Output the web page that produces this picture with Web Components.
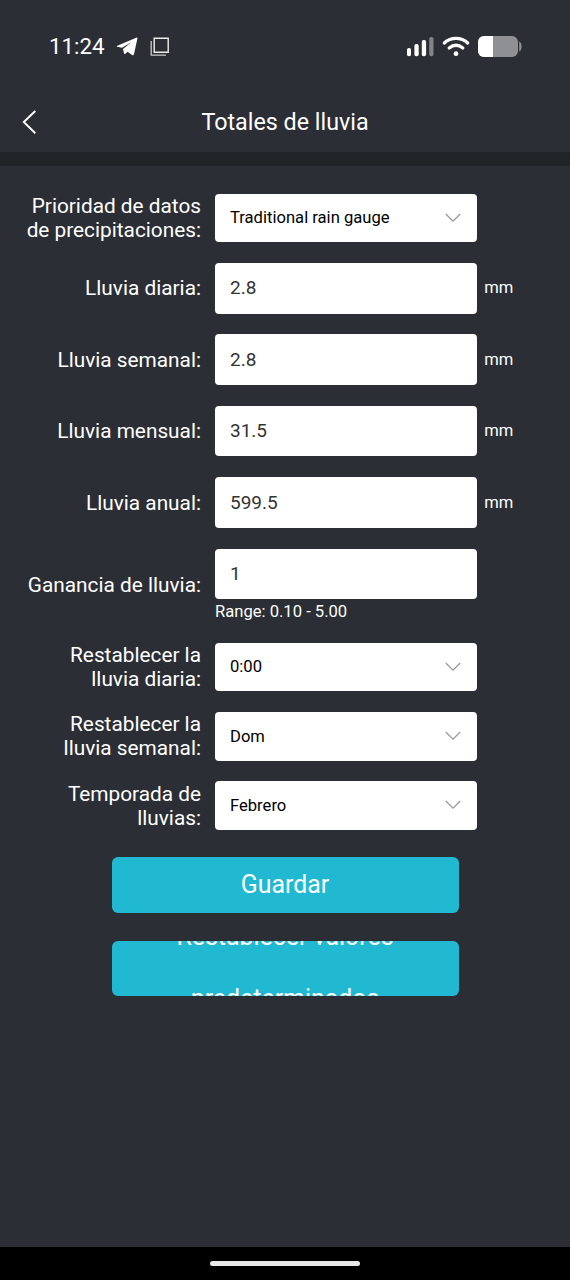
<!DOCTYPE html>
<html lang="es">
<head>
<meta charset="utf-8">
<meta name="viewport" content="width=device-width, initial-scale=1">
<title>Totales de lluvia</title>
<style>
    html, body {
        margin: 0;
        height: 100%;
        background: #2b2e35;
    }
    body {
        font-family: Roboto, "Noto Sans", sans-serif;
        color: #fff;
        overflow: hidden;
    }
</style>
</head>
<body>

<rain-app>
    <status-bar slot="top">11:24</status-bar>
    <title-bar slot="top">Totales de lluvia</title-bar>

    <form-row label="Prioridad de datos de precipitaciones:"><select-box>Traditional rain gauge</select-box></form-row>
    <form-row label="Lluvia diaria:" unit="mm"><text-box>2.8</text-box></form-row>
    <form-row label="Lluvia semanal:" unit="mm"><text-box>2.8</text-box></form-row>
    <form-row label="Lluvia mensual:" unit="mm"><text-box>31.5</text-box></form-row>
    <form-row label="Lluvia anual:" unit="mm"><text-box>599.5</text-box></form-row>
    <form-row label="Ganancia de lluvia:" hint="Range: 0.10 - 5.00"><text-box>1</text-box></form-row>
    <form-row label="Restablecer la lluvia diaria:"><select-box>0:00</select-box></form-row>
    <form-row label="Restablecer la lluvia semanal:"><select-box>Dom</select-box></form-row>
    <form-row label="Temporada de lluvias:"><select-box>Febrero</select-box></form-row>

    <action-button slot="actions">Guardar</action-button>
    <action-button slot="actions">Restablecer valores predeterminados</action-button>
</rain-app>

<script>
class BaseElement extends HTMLElement {
    constructor() {
        super();
        this.attachShadow({ mode: 'open' });
    }
    connectedCallback() {
        this.shadowRoot.innerHTML = this.getStyles() + this.getTemplate();
    }
}

class RainApp extends BaseElement {
    getTemplate() {
        return `
        <slot name="top"></slot>
        <main>
            <div class="rows"><slot></slot></div>
            <div class="actions"><slot name="actions"></slot></div>
        </main>
        <footer><div class="handle"></div></footer>
        `;
    }
    getStyles() {
        return `
        <style>
            :host {
                display: flex;
                flex-direction: column;
                height: 1280px;
            }
            main {
                flex: 1;
                padding-top: 27.8px;
            }
            .rows {
                display: flex;
                flex-direction: column;
                gap: 20.8px;
            }
            .actions {
                display: flex;
                flex-direction: column;
                align-items: center;
                gap: 28px;
                margin-top: 27.4px;
            }
            footer {
                display: flex;
                justify-content: center;
                height: 33px;
                background: #000;
            }
            .handle {
                width: 150px;
                height: 5px;
                margin-top: 14px;
                border-radius: 3px;
                background: #e8e8e8;
            }
        </style>
        `;
    }
}

class StatusBar extends BaseElement {
    getTemplate() {
        return `
        <div class="side">
            <span class="time"><slot></slot></span>
            <svg class="plane" width="22" height="22" viewBox="0 0 22 22">
                <path d="M1.3 10.7 20.2 2.7Q21.6 2.3 21.4 3.6L18 19.3Q17.5 21 16 20L11.6 16.7 9.4 18.7Q8.4 19.4 8 18.3L7 13.9 15.2 7.3 6 12.7 1.3 11.8Q0 11.3 1.3 10.7Z" fill="#fff"/>
            </svg>
            <svg class="copy" width="20" height="20" viewBox="0 0 20 20" fill="none">
                <path d="M4.2 1.2H18.2V15.2H4.2Z" stroke="#eee" stroke-width="1.4"/>
                <path d="M1.2 4V18.2H16" stroke="#ccc" stroke-width="1.3"/>
            </svg>
        </div>
        <svg width="116" height="24" viewBox="0 0 116 24">
            <g fill="#fff">
                <rect x="1" y="14" width="4" height="8.3" rx="1.8"/>
                <rect x="8.4" y="10" width="4.3" height="12.3" rx="1.8"/>
                <rect x="15.8" y="6" width="4.3" height="16.3" rx="1.8"/>
                <rect x="23.2" y="3" width="4.3" height="19.3" rx="1.8" fill="#818388"/>
                <circle cx="50" cy="19.7" r="2.4"/>
            </g>
            <path d="M38.3 9C45 2.8 55 2.8 61.7 9" fill="none" stroke="#fff" stroke-width="3.3" stroke-linecap="round"/>
            <path d="M43.2 14Q50 8.6 56.8 14" fill="none" stroke="#fff" stroke-width="3.3" stroke-linecap="round"/>
            <rect x="72" y="2" width="40" height="21" rx="6" fill="#8f9093"/>
            <path d="M87 2H78A6 6 0 0 0 72 8V17A6 6 0 0 0 78 23H87Z" fill="#fff"/>
            <path d="M113.2 7.5Q115.6 8.5 115.6 12.5T113.2 17.5Z" fill="#8f9093"/>
        </svg>
        `;
    }
    getStyles() {
        return `
        <style>
            :host {
                display: flex;
                justify-content: space-between;
                align-items: center;
                height: 92px;
                padding: 0 48px 0 49px;
            }
            .side {
                display: flex;
                align-items: center;
            }
            .time {
                font-size: 22.3px;
                width: 67px;
            }
            .copy {
                margin-left: 12px;
                margin-top: 1px;
            }
        </style>
        `;
    }
}

class TitleBar extends BaseElement {
    getTemplate() {
        return `
        <svg width="20" height="26" viewBox="0 0 20 26" fill="none">
            <path d="M15.3 2 3.8 13 15.3 24.2" stroke="#fff" stroke-width="1.9"/>
        </svg>
        <h1><slot></slot></h1>
        `;
    }
    getStyles() {
        return `
        <style>
            :host {
                display: grid;
                grid-template-columns: 20px 1fr 20px;
                align-items: center;
                height: 60px;
                padding: 0 20px;
                border-bottom: 14px solid #212427;
            }
            h1 {
                margin: 0;
                font-size: 23.3px;
                font-weight: 400;
                text-align: center;
            }
        </style>
        `;
    }
}

class FormRow extends BaseElement {
    getTemplate() {
        const unit = this.getAttribute('unit');
        const hint = this.getAttribute('hint');
        return `
        <div class="label">${this.getAttribute('label')}</div>
        <div class="field">
            <slot></slot>
            ${hint ? `<div class="hint">${hint}</div>` : ''}
        </div>
        ${unit ? `<div class="unit">${unit}</div>` : ''}
        `;
    }
    getStyles() {
        return `
        <style>
            :host {
                display: grid;
                grid-template-columns: 181px 262.3px 1fr;
                column-gap: 14px;
                align-items: center;
                padding-left: 20px;
            }
            .label {
                font-size: 20.8px;
                line-height: 24px;
                text-align: right;
            }
            .hint {
                height: 22.7px;
                font-size: 16.6px;
                line-height: 25px;
            }
            .unit {
                margin-left: -7px;
                font-size: 16.6px;
                line-height: 20px;
            }
        </style>
        `;
    }
}

class TextBox extends BaseElement {
    getTemplate() {
        return `<slot></slot>`;
    }
    getStyles() {
        return `
        <style>
            :host {
                display: flex;
                align-items: center;
                box-sizing: border-box;
                height: 50.6px;
                padding: 0 15px 1px;
                border-radius: 4px;
                background: #fff;
                color: #333;
                font-size: 19px;
            }
        </style>
        `;
    }
}

class SelectBox extends BaseElement {
    getTemplate() {
        return `
        <slot></slot>
        <svg width="16" height="10" viewBox="0 0 16 10" fill="none">
            <path d="M.8 1 8 8.2 15.2 1" stroke="#999" stroke-width="1.3"/>
        </svg>
        `;
    }
    getStyles() {
        return `
        <style>
            :host {
                display: flex;
                align-items: center;
                justify-content: space-between;
                box-sizing: border-box;
                height: 48.5px;
                padding: 0 16.4px .4px 15px;
                border-radius: 4px;
                background: #fff;
                color: #000;
                font-size: 16.6px;
            }
        </style>
        `;
    }
}

class ActionButton extends BaseElement {
    getTemplate() {
        return `<span><slot></slot></span>`;
    }
    getStyles() {
        return `
        <style>
            :host {
                display: flex;
                align-items: center;
                justify-content: center;
                width: 347px;
                height: 55.4px;
                border-radius: 6px;
                background: #20b9d1;
                font-size: 24.9px;
                line-height: 62px;
                text-align: center;
                /* long labels wrap and are clipped by the fixed height */
                overflow: hidden;
            }
        </style>
        `;
    }
}

customElements.define('rain-app', RainApp);
customElements.define('status-bar', StatusBar);
customElements.define('title-bar', TitleBar);
customElements.define('form-row', FormRow);
customElements.define('text-box', TextBox);
customElements.define('select-box', SelectBox);
customElements.define('action-button', ActionButton);
</script>
</body>
</html>
